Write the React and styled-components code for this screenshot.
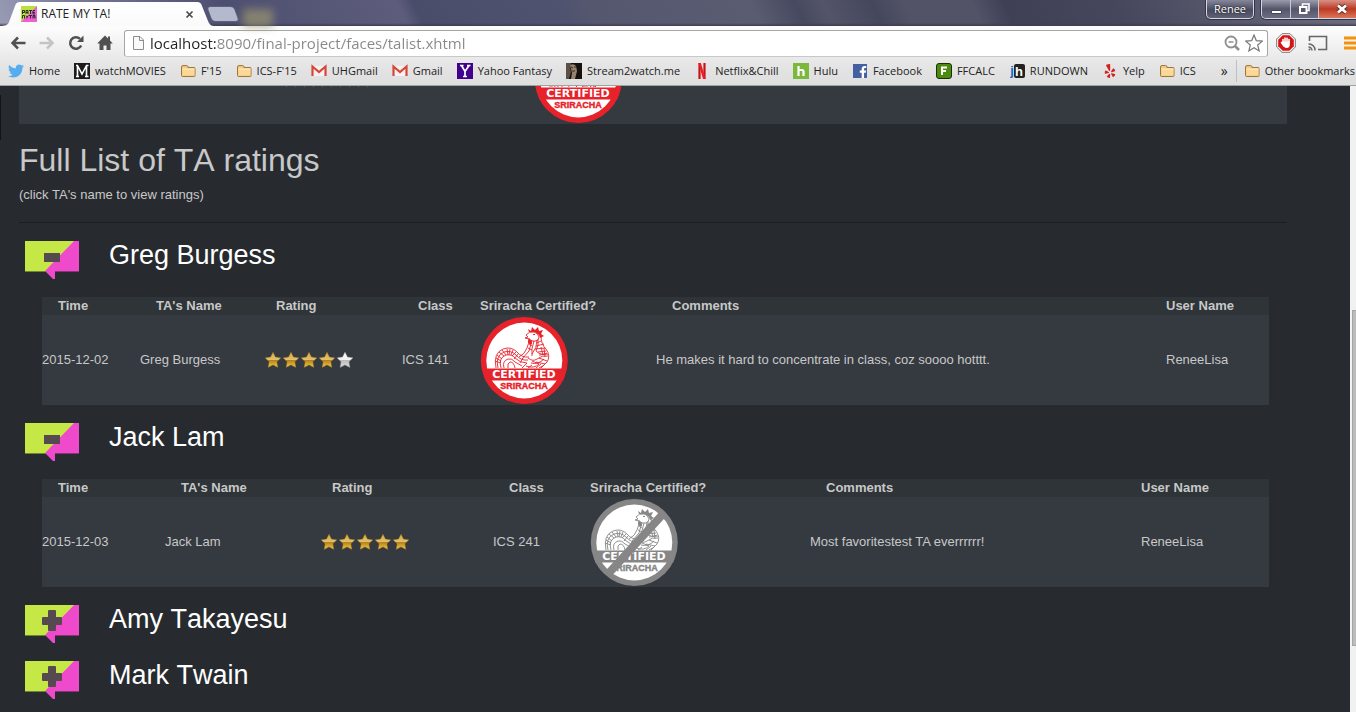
import React from "react";
import styled, { createGlobalStyle, css } from "styled-components";
import { FaTwitter, FaYelp, FaFacebookF } from "react-icons/fa";

const Global = createGlobalStyle`
  *, *::before, *::after { box-sizing: border-box; }
  html, body, #root { height: 100%; }
  body { margin: 0; background: #272b30; overflow: hidden; }
  button, input { font: inherit; color: inherit; border: 0; padding: 0; margin: 0; background: none; }
  svg { display: block; flex: none; }
`;

/* ---------- browser frame ---------- */

const Window = styled.div`
  height: 100vh;
  display: flex;
  flex-direction: column;
  overflow: hidden;
  font: 12px/16px "Open Sans", "Noto Sans", sans-serif;
  color: #222;
`;

const TitleBar = styled.header`
  position: relative;
  display: flex;
  flex: none;
  height: 26px;
  background: linear-gradient(to bottom, rgba(40, 40, 60, 0) 23px, #3d3d4e 26px),
    linear-gradient(65deg, #9a9bb3 0, #7f80a0 60px, #4e4f70 210px, #5d5c7d 370px, #4a4d6a 384px, #50536f 520px,
      #55576f 540px, #5a5c72 690px, #474960 730px, #535468 755px, #45475d 800px, #525366 830px, #525366 890px, #3f4056 920px, #46465c 1020px, #6d6e80 1240px);
`;

const Tab = styled.div`
  display: flex;
  align-items: center;
  width: 214px;
  height: 26px;
  padding: 2px 20px 0 21px;
  background: linear-gradient(#ffffff, #fafafa);
  clip-path: path("M0 26 C5 26 8 25 9 22 L15 6 C16 3 17 2 20 2 H197 C200 2 201 3 202 6 L208 21 C209 24 211 26 214 26 Z");
`;

const TabTitle = styled.button`
  flex: 1;
  text-align: left;
  margin-left: 4px;
`;

const NewTab = styled.button`
  width: 26px;
  height: 14px;
  margin: 7px 0 0 -4px;
  border-radius: 3px;
  background: #b4b9cd;
  transform: skewX(20deg);
  box-shadow: 0 0 0 1px #5d607c;
`;

const Glow = styled.div`
  width: 30px;
  height: 18px;
  margin: 9px 0 0 7px;
  background: #9c9770;
  opacity: 0.7;
  filter: blur(4px);
`;

const Caption = styled.div`
  display: flex;
  align-items: flex-start;
  gap: 7px;
  margin-left: auto;
  color: #fff;
`;

const captionBox = css`
  border: 1px solid #d5d6df;
  border-top: 0;
  border-radius: 0 0 5px 5px;
  box-shadow: 0 0 0 1px #33344a;
`;

const UserButton = styled.button`
  ${captionBox}
  width: 48px;
  height: 19px;
  font-size: 11px;
  line-height: 18px;
  background: linear-gradient(#86879a, #4a4b60 55%, #5f6074);
  text-shadow: 0 0 2px #000;
`;

const WindowButtons = styled.div`
  ${captionBox}
  display: flex;
  width: 95px;
  height: 19px;
  overflow: hidden;
  border-right: 0;
  border-bottom-right-radius: 0;
`;

const WindowButton = styled.button`
  display: flex;
  align-items: center;
  justify-content: center;
  flex: ${(p) => (p.$close ? "1" : "0 0 28px")};
  padding-left: ${(p) => (p.$close ? "8px" : "0")};
  border-left: ${(p) => (p.$first ? "0" : "1px solid #c9c9d2")};
  background: ${(p) =>
    p.$close
      ? "linear-gradient(#d99083, #b83a25 50%, #c8452b 60%, #d9775c)"
      : "linear-gradient(#9a9bab, #55566b 50%, #6c6d80)"};
`;

const Chrome = styled.div`
  flex: none;
  background: linear-gradient(#fdfdfd, #e2e2e2 45px, #dfdfdf);
  border-bottom: 1px solid #9ba3a3;
`;

const Toolbar = styled.nav`
  display: flex;
  align-items: center;
  height: 31px;
  padding: 4px 0 1px 9px;
  overflow: hidden;
`;

const ToolButton = styled.button`
  flex: none;
  display: flex;
  justify-content: center;
  width: 18px;
  margin-right: ${(p) => p.$gap || 11}px;
`;

const Omnibox = styled.div`
  flex: 1;
  display: flex;
  align-items: center;
  height: 27px;
  padding: 0 4px 0 7px;
  border: 1px solid #a6a6a6;
  border-bottom-color: #c8c8c8;
  border-radius: 3px;
  background: #fff;
`;

const Address = styled.input`
  flex: 1;
  min-width: 0;
  margin-left: 5px;
  font-size: 15px;
  line-height: 22px;
  outline: none;
  background: linear-gradient(90deg, #222 66px, #888 66px);
  -webkit-background-clip: text;
  background-clip: text;
  -webkit-text-fill-color: transparent;
`;

const OmniButton = styled.button`
  flex: none;
  margin-left: 5px;
`;

const Extensions = styled.div`
  flex: none;
  display: flex;
  align-items: center;
  width: 88px;
  padding-left: 8px;
  gap: 12px;
  overflow: hidden;
`;

const Bookmarks = styled.nav`
  display: flex;
  align-items: center;
  height: 28px;
  padding-left: 8px;
  font-size: 11px;
  overflow: hidden;
`;

const Bookmark = styled.a`
  flex: none;
  display: flex;
  align-items: center;
  gap: 5px;
  margin-right: 14px;
  color: #222;
  text-decoration: none;
  white-space: nowrap;
`;

const Overflow = styled.button`
  flex: none;
  margin: 0 8px 0 auto;
  font-size: 14px;
`;

const Divider = styled.span`
  flex: none;
  width: 1px;
  height: 22px;
  margin-right: 7px;
  background: #b8c0c8;
`;

const LastBookmark = styled(Bookmark)`
  margin-right: 1px;
`;

/* ---------- page ---------- */

const Viewport = styled.div`
  flex: 1;
  min-height: 0;
  display: flex;
  overflow: hidden;
  background: #272b30;
`;

const Page = styled.main`
  position: relative;
  flex: 1;
  padding: 0 63px 0 19px;
  overflow: hidden;
  font: 13px/18px "Liberation Sans", Arial, sans-serif;
  color: #c8c8c8;
`;

const EdgeMark = styled.span`
  position: absolute;
  left: 0;
  top: 9px;
  width: 1px;
  height: 45px;
  background: #111316;
`;

const ScrolledTable = styled.div`
  display: flex;
  align-items: flex-end;
  height: 38px;
  overflow: hidden;
`;

const Title = styled.h1`
  margin: 18px 0 8px;
  font-size: 32px;
  line-height: 36px;
  font-weight: 400;
  font-kerning: none;
`;

const Hint = styled.p`
  margin: 0;
`;

const Rule = styled.hr`
  margin: 18px 0;
  border: 0;
  border-top: 1px solid #1b1e21;
`;

const Heading = styled.h2`
  margin: 0;
  height: 56px;
  font-size: 27px;
  line-height: 28px;
  font-weight: 400;
  font-kerning: none;
  color: #fff;
`;

const Toggle = styled.button`
  display: flex;
  align-items: flex-start;
  gap: 30px;
  padding-left: 6px;
  cursor: pointer;
`;

const Panel = styled.div`
  padding: 0 18px 18px 23px;
`;

const Table = styled.table`
  width: 100%;
  table-layout: fixed;
  border-collapse: collapse;
  background: #353a41;
  white-space: nowrap;
`;

const Th = styled.th`
  height: 18px;
  padding: 0 0 0 ${(p) => (p.$sortable ? 16 : 0)}px;
  text-align: left;
  background: #2e3437;
`;

const Td = styled.td`
  height: 90px;
  padding: 0;
  vertical-align: middle;
`;

const StarRow = styled.div`
  display: flex;
  gap: 2px;
  padding-left: 5px;
`;

const ScrollTrack = styled.div`
  flex: none;
  width: 6px;
  display: grid;
  grid-template-rows: 224fr 336fr 66fr;
  padding-left: 2px;
  background: #f1f1f1;
`;

const Thumb = styled.div`
  grid-row: 2;
  background: #bcbcbc;
  border: 1px solid #a5a5a5;
  border-right: 0;
`;

/* ---------- drawings ---------- */

const Svg = ({ w = 16, h = 16, children, ...rest }) => (
  <svg width={w} height={h} viewBox={`0 0 ${w} ${h}`} aria-hidden="true" {...rest}>
    {children}
  </svg>
);

const Letter = ({ x = 8, y = 13, size = 13, fill = "#fff", children }) => (
  <text x={x} y={y} fontSize={size} fill={fill} textAnchor="middle" fontWeight="700" fontFamily="Liberation Sans, Arial, sans-serif">
    {children}
  </text>
);

const Folder = () => (
  <Svg>
    <path d="M1.500 4q0-1.500 1.500-1.500h3.500q1.500 0 1.500 1.500v.5h6q1 0 1 1v7q0 1-1 1h-11.500q-1 0-1-1z" fill="#f3c87c" stroke="#a0763f" />
    <path d="M2.500 6h12v6.500h-12z" fill="#fbd898" />
    <path d="M2.500 6h12" stroke="#fff0cc" />
  </Svg>
);

const Gmail = () => (
  <Svg>
    <path d="M1 3h14v10H1z" fill="#f4f2f0" />
    <path d="M1.500 13V3.500L8 9l6.500-5.500V13" fill="none" stroke="#d8453a" strokeWidth="2.200" />
  </Svg>
);

const favicons = {
  twitter: <FaTwitter size={16} color="#55acee" />,
  watch: (
    <Svg>
      <path d="M0 0h16v16H0z" fill="#1c1c1c" />
      <path d="M2 13.500h3M11 13.500h3.500M3.500 13V2.500L8 11l4.500-8.500V13M2 2.500h2M12 2.500h2.500" stroke="#fff" strokeWidth="1.600" fill="none" />
    </Svg>
  ),
  folder: <Folder />,
  gmail: <Gmail />,
  yahoo: (
    <Svg>
      <path d="M0 0h16v16H0z" fill="#42008f" />
      <path d="M3 2.500h3.500M10 2.500h3.500M4.500 2.500L8 8.500l4-6M8 8.500v5M6 13.500h4" stroke="#fff" strokeWidth="1.700" fill="none" />
    </Svg>
  ),
  stream: (
    <Svg>
      <path d="M0 0h16v16H0z" fill="#15110f" />
      <path d="M0 0h5l-1 5 1 4-2 7H0z" fill="#5c5148" />
      <path d="M4 2q4-2 6 1l1 5-2 8H5l1-6z" fill="#96826d" />
      <path d="M5 4l2 1M8 4h2M6 8h3" stroke="#3a2d24" />
    </Svg>
  ),
  netflix: (
    <Svg>
      <path d="M5.500 0v16M10.500 0v16" stroke="#c5131c" strokeWidth="2.200" />
      <path d="M4.400 0h2.500l4.700 16H9z" fill="#ee1c25" />
    </Svg>
  ),
  hulu: (
    <Svg>
      <path d="M0 0h16v16H0z" fill="#7cb93b" />
      <path d="M5.500 3v10M5.500 8q0-1 1.500-1h2q1.500 0 1.500 1.500V13" stroke="#fff" strokeWidth="2.200" fill="none" />
    </Svg>
  ),
  facebook: (
    <Svg>
      <path d="M1 1h14v14H1z" fill="#4460a0" />
      <FaFacebookF x="5" y="3" size={12} color="#fff" />
    </Svg>
  ),
  ffcalc: (
    <Svg>
      <rect x="0.500" y="0.500" width="15" height="15" rx="2.500" fill="#4f8a10" stroke="#16300a" />
      <path d="M6 12V4.500h5M6 8h4" stroke="#fff" strokeWidth="2" fill="none" />
    </Svg>
  ),
  rundown: (
    <Svg>
      <rect x="5" y="1" width="11" height="14" rx="2" fill="#222" />
      <Letter x={3} y={12} fill="#1467c4">j</Letter>
      <Letter x={10} y={13}>h</Letter>
    </Svg>
  ),
  yelp: <FaYelp size={14} color="#d3221e" style={{ margin: "0 1px" }} />,
};

const Bubble = ({ open }) => (
  <Svg w={54} h={38}>
    <path d="M0 0h54v31H0z" fill="#c6e846" />
    <path d="M49 0h5v31H30v7h-2l-8-8z" fill="#ef4acb" />
    <path d="M0 30.500h21" stroke="#6f8436" />
    <path d="M30 30.500h24" stroke="#8a3478" />
    {open ? (
      <rect x="19" y="12" width="16" height="9" fill="#544a50" />
    ) : (
      <path d="M24 5h6q1 0 1 1v6h5q1 0 1 1v6q0 1-1 1h-5v5q0 1-1 1h-6q-1 0-1-1v-5h-5q-1 0-1-1v-6q0-1 1-1h5V6q0-1 1-1z" fill="#544a50" />
    )}
  </Svg>
);

const Star = ({ on }) => (
  <Svg>
    <defs>
      <linearGradient id={on ? "starOn" : "starOff"} x1="0" y1="0" x2="0" y2="1">
        <stop offset="0" stopColor={on ? "#d9a93c" : "#ffffff"} />
        <stop offset="0.5" stopColor={on ? "#e0c070" : "#f0f0f0"} />
        <stop offset="0.54" stopColor={on ? "#b5821a" : "#bcbcbc"} />
        <stop offset="1" stopColor={on ? "#f2cf4a" : "#dedede"} />
      </linearGradient>
    </defs>
    <path
      d="M8 0l2.500 5 5.500.8-4 3.900.9 5.800L8 12.900l-4.900 2.600.9-5.800L0 5.800 5.500 5z"
      fill={`url(#${on ? "starOn" : "starOff"})`}
      stroke={on ? "#7d5c1c" : "#8b8b8b"}
      strokeWidth="0.400"
    />
  </Svg>
);

const Stars = ({ value }) => (
  <StarRow role="img" aria-label={`${value} of 5`}>
    {[1, 2, 3, 4, 5].map((n) => (
      <Star key={n} on={n <= value} />
    ))}
  </StarRow>
);

const Badge = ({ certified }) => {
  const ink = certified ? "#e8222b" : "#868686";
  return (
    <Svg w={88} h={88}>
      <circle cx="44.300" cy="44.500" r="43.500" fill={ink} />
      <circle cx="44.300" cy="44.500" r="38" fill="#fff" />
      <g fill="none" stroke={ink} strokeWidth="0.900">
        <path d="M16 52q-3-15 7-19 8-3 14 3 5 6 12 5" />
        <path d="M18 52q-3-12 6-16 7-2 12 3 5 6 12 5" />
        <path d="M21 52q-3-10 5-13 6-1 9 3 5 5 12 5" />
        <path d="M24 52q-2-7 4-9 4-1 7 3l7 4" />
        <path d="M28 52q-1-5 2-6 4 0 5 6" />
        <path d="M17 39l5 4M15 45l6 2M22 34l4 5M27 33l1 6M33 34l-2 5M38 38l-4 5M43 42l-3 5M19 36l5 4M16 42l5 3M30 33l-1 6M36 36l-4 4" />
        <path d="M49 22q0 6-2 10-2 6-8 9" />
        <path d="M52 24l-3 11-7 8M54 25q-3 8-2 15M57 24q0 8-5 14" />
        <path d="M61 20q0 8 5 13 5 7 1 13-3 4-8 6" />
        <path d="M58 23q1 6-2 12 5 5 11 2M56 30l8-2M55 33l10-1M57 27l4-2M49 28l3 2M48 32l4 2M58 36l8-1M59 39l9-1" />
        <path d="M48 42q5 4 9 1 5-4 11-3M51 47q7 2 13-4M46 50q8 3 13-2l-7-3M59 42l8 3M56 46l9 2M61 31l2 8M64 32l1 9" />
        <path d="M42 52l5-5M48 52l4-3M56 52l5-4M61 52l4-4" />
        <path d="M46 19q3-4 8-3 4 1 5 5 0 3-3 4-4 1-7-2l-4-1 3-1z" />
      </g>
      <path d="M49 16l-1-3 3 2 1-4 3 3 3-3 1 4 4-1-2 4 3 2-4 2-1-3-4-3z" fill={ink} />
      <path d="M49 23q3 1 3 5-4 1-4-3z" fill={ink} />
      <path d="M53 18.500h2" stroke={ink} strokeWidth="1.200" />
      <path d="M5 52.500h78.500v12H5z" fill={ink} />
      <g fontWeight="700" textAnchor="middle">
        <text x="44" y="62" fontSize="11" fill="#fff" fontFamily="DejaVu Sans, sans-serif">
          CERTIFIED
        </text>
        <text x="44" y="73" fontSize="9" fill={ink} stroke={ink} strokeWidth="0.400" fontFamily="Liberation Sans, sans-serif">
          SRIRACHA
        </text>
      </g>
      {!certified && <path d="M18 76L73 16" stroke={ink} strokeWidth="8" />}
    </Svg>
  );
};

/* ---------- data ---------- */

const bookmarks = [
  ["Home", "twitter"],
  ["watchMOVIES", "watch"],
  ["F'15", "folder"],
  ["ICS-F'15", "folder"],
  ["UHGmail", "gmail"],
  ["Gmail", "gmail"],
  ["Yahoo Fantasy", "yahoo"],
  ["Stream2watch.me", "stream"],
  ["Netflix&Chill", "netflix"],
  ["Hulu", "hulu"],
  ["Facebook", "facebook"],
  ["FFCALC", "ffcalc"],
  ["RUNDOWN", "rundown"],
  ["Yelp", "yelp"],
  ["ICS", "folder"],
];

const assistants = [
  {
    name: "Greg Burgess",
    columns: [98, 120, 142, 78, 176, null, 103],
    rating: { time: "2015-12-02", stars: 4, course: "ICS 141", certified: true, comment: "He makes it hard to concentrate in class, coz soooo hotttt.", user: "ReneeLisa" },
  },
  {
    name: "Jack Lam",
    columns: [123, 151, 177, 97, 220, null, 128],
    rating: { time: "2015-12-03", stars: 5, course: "ICS 241", certified: false, comment: "Most favoritestest TA everrrrrr!", user: "ReneeLisa" },
  },
  { name: "Amy Takayesu" },
  { name: "Mark Twain" },
];

const Columns = ({ widths }) => (
  <colgroup>
    {widths.map((w, i) => (
      <col key={i} width={w || undefined} />
    ))}
  </colgroup>
);

const Ratings = ({ name, columns, rating }) => (
  <Panel>
    <Table>
      <Columns widths={columns} />
      <thead>
        <tr>
          <Th $sortable>Time</Th>
          <Th $sortable>TA's Name</Th>
          <Th $sortable>Rating</Th>
          <Th $sortable>Class</Th>
          <Th>Sriracha Certified?</Th>
          <Th $sortable>Comments</Th>
          <Th>User Name</Th>
        </tr>
      </thead>
      <tbody>
        <tr>
          <Td>{rating.time}</Td>
          <Td>{name}</Td>
          <Td><Stars value={rating.stars} /></Td>
          <Td>{rating.course}</Td>
          <Td><Badge certified={rating.certified} /></Td>
          <Td>{rating.comment}</Td>
          <Td>{rating.user}</Td>
        </tr>
      </tbody>
    </Table>
  </Panel>
);

export default function App() {
  return (
    <Window>
      <Global />
      <TitleBar>
        <Tab>
          <Svg>
            <path d="M0 0h16v16H0z" fill="#ef5fd0" />
            <path d="M0 0h16L0 16z" fill="#b9e03c" />
            <path d="M1.500 8V4.500h2v2h-2M5 8V4.500h2V8M5 6.500h2M8 4.500h3M9.500 4.500V8M14 4.500h-2V8h2M12 6.500h2M1.500 12.500V9.500h2v3M5 9.500l1 1.500 1.500-1.500M6 11v1.500M8 9.500h3M9.500 9.500v3M12 12.500V9.500h2v3M12 11h2" stroke="#2c2c34" fill="none" />
          </Svg>
          <TabTitle>RATE MY TA!</TabTitle>
          <button aria-label="Close tab">
            <Svg w={9} h={9}>
              <path d="M1.500 1.500l6 6M7.500 1.500l-6 6" stroke="#4a4a4a" strokeWidth="1.700" />
            </Svg>
          </button>
        </Tab>
        <NewTab aria-label="New tab" />
        <Glow />
        <Caption>
          <UserButton>Renee</UserButton>
          <WindowButtons>
            <WindowButton $first aria-label="Minimize">
              <Svg w={13} h={14}><path d="M1.500 8.500h10v3h-10z" fill="#fff" stroke="#44455a" /></Svg>
            </WindowButton>
            <WindowButton aria-label="Restore">
              <Svg w={13} h={14}>
                <path d="M4.500 4.500V2h6.500v6.500H9" stroke="#fff" strokeWidth="1.600" fill="none" />
                <path d="M2 5h6.500v6H2z" stroke="#fff" strokeWidth="2" fill="#55566b" />
              </Svg>
            </WindowButton>
            <WindowButton $close aria-label="Close">
              <Svg w={12} h={14}>
                <path d="M2 3.500l8 7M10 3.500l-8 7" stroke="#5c2b2b" strokeWidth="4.500" />
                <path d="M2 3.500l8 7M10 3.500l-8 7" stroke="#fff" strokeWidth="2.800" />
              </Svg>
            </WindowButton>
          </WindowButtons>
        </Caption>
      </TitleBar>

      <Chrome>
        <Toolbar>
          <ToolButton aria-label="Back">
            <Svg><path d="M15.500 8H3M8 2.500L2.500 8 8 13.500" stroke="#505050" strokeWidth="2.500" fill="none" /></Svg>
          </ToolButton>
          <ToolButton aria-label="Forward">
            <Svg><path d="M.5 8H13M8 2.500l5.500 5.500L8 13.500" stroke="#c4c4c4" strokeWidth="2.500" fill="none" /></Svg>
          </ToolButton>
          <ToolButton aria-label="Reload">
            <Svg>
              <path d="M13.200 10.500A5.800 5.800 0 1 1 12 3.800" stroke="#505050" strokeWidth="2.500" fill="none" />
              <path d="M15.500 .5v6.500H9z" fill="#505050" />
            </Svg>
          </ToolButton>
          <ToolButton aria-label="Home page" $gap={10}>
            <Svg><path d="M8 .5l3 3V1.500h2v4l2.800 3H13.500V15H9.500v-4.500h-3V15h-4V8.500H.2z" fill="#505050" /></Svg>
          </ToolButton>
          <Omnibox>
            <Svg w={13}>
              <path d="M1.500 1.500h6.500l3.500 3.500v9.500h-10z" fill="#fafafa" stroke="#8c8c8c" />
              <path d="M7.500 1.500v4h4" fill="none" stroke="#8c8c8c" />
            </Svg>
            <Address aria-label="Address" defaultValue="localhost:8090/final-project/faces/talist.xhtml" />
            <OmniButton aria-label="Zoom">
              <Svg>
                <circle cx="7" cy="7" r="5.500" stroke="#8e8e8e" strokeWidth="1.800" fill="#fff" />
                <path d="M4.500 7h5" stroke="#8e8e8e" strokeWidth="1.500" />
                <path d="M11 11l4 4" stroke="#8e8e8e" strokeWidth="2.500" />
              </Svg>
            </OmniButton>
            <OmniButton aria-label="Bookmark this page">
              <Svg w={18} h={18}>
                <path d="M9 1l2.300 5.600 6 .5-4.600 3.900 1.400 5.900L9 13.700l-5.100 3.200 1.400-5.900L.7 7.100l6-.5z" fill="#fff" stroke="#777" strokeWidth="1.200" />
              </Svg>
            </OmniButton>
          </Omnibox>
          <Extensions>
            <button aria-label="Ad blocker">
              <Svg w={20} h={20}>
                <path d="M6 .7h8L19.300 6v8L14 19.300H6L.7 14V6z" fill="#fff" stroke="#777" />
                <path d="M6.700 2.200h6.600l4.500 4.500v6.600l-4.500 4.500H6.700l-4.500-4.500V6.700z" fill="#d81313" />
                <path d="M7 9V6.500M9 9V5M11 9V5.300M13 9.500V6.500M5.500 9.500L8 13" stroke="#fff" strokeWidth="1.600" strokeLinecap="round" />
                <path d="M6.300 8.500h7.500v3q0 3.500-3.500 3.500-2 0-4-4z" fill="#fff" />
              </Svg>
            </button>
            <button aria-label="Cast">
              <Svg w={20}>
                <path d="M1.500 6V1.500h17v13H10" stroke="#666" strokeWidth="1.600" fill="none" />
                <path d="M.5 9a6 6 0 0 1 6.500 6.500M.5 12a3.500 3.500 0 0 1 3.500 3.500" stroke="#666" strokeWidth="1.500" fill="none" />
                <circle cx="1.500" cy="14.500" r="1" fill="#666" />
              </Svg>
            </button>
            <button aria-label="Menu">
              <Svg w={18}><path d="M4 3h14M4 8h14M4 13h14" stroke="#f4920b" strokeWidth="3" /></Svg>
            </button>
          </Extensions>
        </Toolbar>
        <Bookmarks>
          {bookmarks.map(([label, icon]) => (
            <Bookmark key={label} href="#">
              {favicons[icon]}
              {label}
            </Bookmark>
          ))}
          <Overflow aria-label="More bookmarks">»</Overflow>
          <Divider />
          <LastBookmark href="#">
            <Folder />
            Other bookmarks
          </LastBookmark>
        </Bookmarks>
      </Chrome>

      <Viewport>
        <Page>
          <EdgeMark />
          <ScrolledTable>
            <Table>
              <Columns widths={[259, 256, null]} />
              <tbody>
                <tr>
                  <Td />
                  <Td><Stars value={5} /></Td>
                  <Td><Badge certified /></Td>
                </tr>
              </tbody>
            </Table>
          </ScrolledTable>
          <Title>Full List of TA ratings</Title>
          <Hint>(click TA's name to view ratings)</Hint>
          <Rule />
          {assistants.map((ta) => (
            <section key={ta.name}>
              <Heading>
                <Toggle aria-expanded={Boolean(ta.rating)}>
                  <Bubble open={Boolean(ta.rating)} />
                  {ta.name}
                </Toggle>
              </Heading>
              {ta.rating && <Ratings {...ta} />}
            </section>
          ))}
        </Page>
        <ScrollTrack>
          <Thumb />
        </ScrollTrack>
      </Viewport>
    </Window>
  );
}
